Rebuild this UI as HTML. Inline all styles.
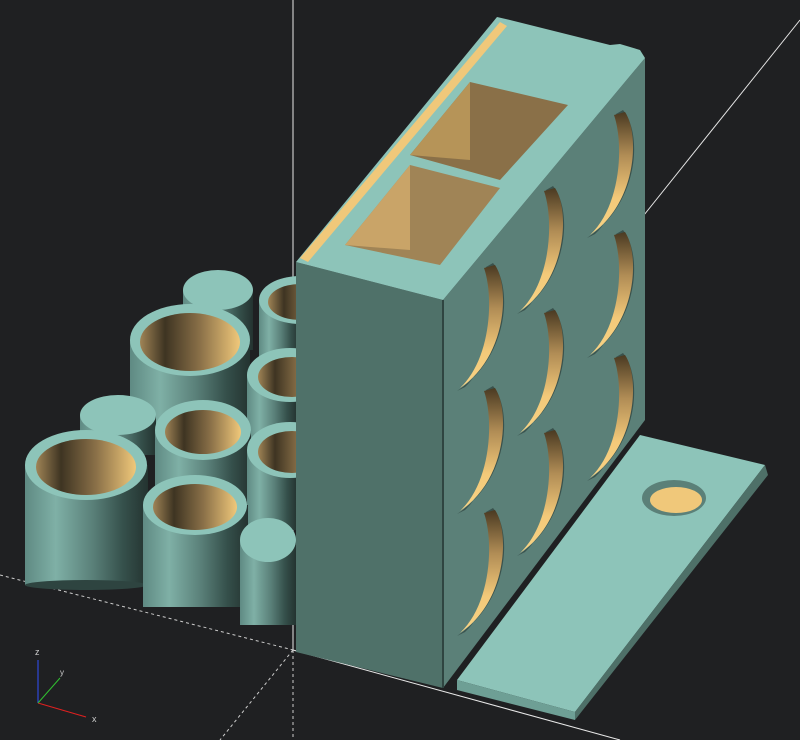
<!DOCTYPE html><html><head><style>html,body{margin:0;padding:0;background:#1f2022;}svg{display:block}</style></head><body>
<svg width="800" height="740" viewBox="0 0 800 740" xmlns="http://www.w3.org/2000/svg">
<defs>
<linearGradient id="cyl" x1="0" x2="1" y1="0" y2="0">
<stop offset="0" stop-color="#5f8a83"/><stop offset="0.25" stop-color="#7fb0a6"/><stop offset="0.55" stop-color="#5a8079"/><stop offset="0.8" stop-color="#35504b"/><stop offset="1" stop-color="#243330"/></linearGradient>
<linearGradient id="hole" x1="0" x2="1" y1="0" y2="0">
<stop offset="0" stop-color="#a08456"/><stop offset="0.25" stop-color="#3e3422"/><stop offset="0.6" stop-color="#8a7048"/><stop offset="1" stop-color="#f0c87a"/></linearGradient>
<linearGradient id="cr" x1="0" x2="0" y1="0" y2="1">
<stop offset="0" stop-color="#4a3a22"/><stop offset="0.35" stop-color="#b08c55"/><stop offset="0.7" stop-color="#f3c979"/><stop offset="1" stop-color="#f8d385"/></linearGradient>
<g id="c">
<path d="M-2,-2 C18,22 14,92 -38,126 L-30,122 C2,92 4,32 -9,2 Z" fill="#3a524d"/>
<path d="M0,0 C15,22 12,92 -35,123 C-4,94 -1,32 -11,3 Z" fill="url(#cr)"/>
</g>
</defs>
<line x1="293" y1="0" x2="293" y2="650" stroke="#e8e8e8" stroke-width="1"/>
<line x1="293" y1="650" x2="293" y2="740" stroke="#ccc" stroke-dasharray="3,3"/>
<line x1="800" y1="20" x2="640" y2="220" stroke="#e8e8e8"/>
<line x1="0" y1="575" x2="293" y2="650" stroke="#ccc" stroke-dasharray="3,3"/>
<line x1="293" y1="650" x2="620" y2="740" stroke="#e8e8e8"/>
<line x1="293" y1="650" x2="220" y2="740" stroke="#ccc" stroke-dasharray="3,3"/>
<rect x="183" y="290" width="70" height="60" fill="url(#cyl)"/><ellipse cx="218" cy="290" rx="35" ry="20" fill="#8dc4b9"/>
<rect x="259" y="300" width="40" height="90" fill="url(#cyl)"/><ellipse cx="300" cy="300" rx="41" ry="24" fill="#8dc4b9"/><ellipse cx="300" cy="302" rx="32" ry="18" fill="url(#hole)"/>
<rect x="130" y="340" width="120" height="110" fill="url(#cyl)"/><ellipse cx="190" cy="340" rx="60" ry="36" fill="#8dc4b9"/><ellipse cx="190" cy="342" rx="50" ry="29" fill="url(#hole)"/>
<rect x="247" y="375" width="50" height="80" fill="url(#cyl)"/><ellipse cx="290" cy="375" rx="43" ry="27" fill="#8dc4b9"/><ellipse cx="292" cy="377" rx="34" ry="20" fill="url(#hole)"/>
<rect x="80" y="415" width="76" height="40" fill="url(#cyl)"/><ellipse cx="118" cy="415" rx="38" ry="20" fill="#8dc4b9"/>
<rect x="155" y="430" width="96" height="70" fill="url(#cyl)"/><ellipse cx="203" cy="430" rx="48" ry="30" fill="#8dc4b9"/><ellipse cx="203" cy="432" rx="38" ry="22" fill="url(#hole)"/>
<rect x="247" y="450" width="50" height="80" fill="url(#cyl)"/><ellipse cx="290" cy="450" rx="43" ry="28" fill="#8dc4b9"/><ellipse cx="292" cy="452" rx="34" ry="21" fill="url(#hole)"/>
<rect x="25" y="465" width="123" height="120" fill="url(#cyl)"/><ellipse cx="86" cy="585" rx="61" ry="5" fill="#2e4440"/><ellipse cx="86" cy="465" rx="61" ry="35" fill="#8dc4b9"/><ellipse cx="86" cy="467" rx="50" ry="28" fill="url(#hole)"/>
<rect x="143" y="505" width="105" height="102" fill="url(#cyl)"/><ellipse cx="195" cy="505" rx="52" ry="30" fill="#8dc4b9"/><ellipse cx="195" cy="507" rx="42" ry="23" fill="url(#hole)"/>
<rect x="240" y="540" width="56" height="85" fill="url(#cyl)"/><ellipse cx="268" cy="540" rx="28" ry="22" fill="#8dc4b9"/>
<polygon points="457,680 640,435 765,465 575,712" fill="#8dc4b9"/>
<polygon points="457,680 575,712 575,720 457,690" fill="#6e9f95"/>
<polygon points="575,712 765,465 768,475 575,720" fill="#4e7068"/>
<ellipse cx="674" cy="498" rx="32" ry="18" fill="#5b8078"/><ellipse cx="676" cy="500" rx="26" ry="13" fill="#f0c87a"/>
<polygon points="296,262 443,300 443,688 296,652" fill="#4f7169"/>
<polygon points="443,300 645,58 645,420 443,688" fill="#5b8078"/>
<polygon points="296,262 497,17 510,20 610,45 620,44 640,50 645,58 443,300" fill="#8dc4b9"/>
<polygon points="300,258 500,22 507,26 308,262" fill="#f0c87a"/>
<polygon points="345,245 410,165 500,188 440,265" fill="#a08456"/>
<polygon points="345,245 410,165 410,250" fill="#c9a468"/>
<polygon points="410,155 470,82 568,105 500,180" fill="#8a7048"/>
<polygon points="410,155 470,82 470,160" fill="#b69458"/>
<line x1="443" y1="300" x2="443" y2="688" stroke="#2f4541" stroke-width="2"/>
<use href="#c" x="625" y="112"/><use href="#c" x="625" y="232"/><use href="#c" x="625" y="355"/>
<use href="#c" x="555" y="188"/><use href="#c" x="555" y="310"/><use href="#c" x="555" y="430"/>
<use href="#c" x="495" y="265"/><use href="#c" x="495" y="388"/><use href="#c" x="495" y="510"/>
<line x1="38" y1="703" x2="38" y2="660" stroke="#3050ff"/><line x1="38" y1="703" x2="86" y2="717" stroke="#e02020"/><line x1="38" y1="703" x2="60" y2="678" stroke="#30c030"/>
<text x="35" y="655" fill="#ccc" font-family="Liberation Sans,sans-serif" font-size="9">z</text>
<text x="60" y="675" fill="#ccc" font-family="Liberation Sans,sans-serif" font-size="8">y</text>
<text x="92" y="722" fill="#ccc" font-family="Liberation Sans,sans-serif" font-size="9">x</text>
</svg></body></html>
